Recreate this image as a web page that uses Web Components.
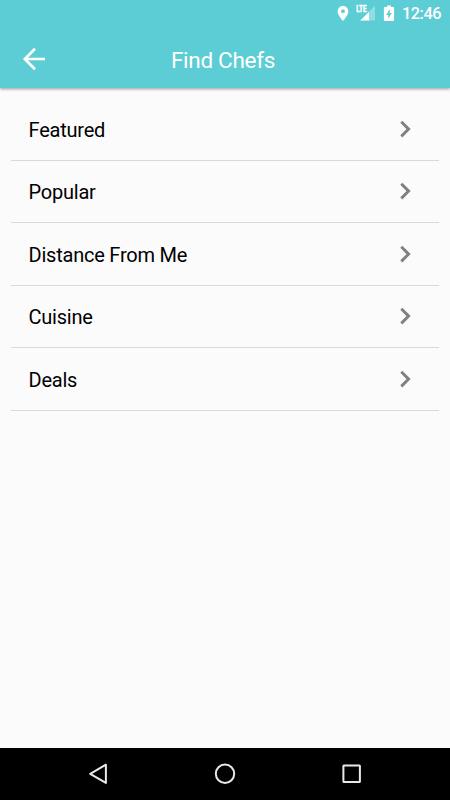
<!DOCTYPE html>
<html lang="en">
<head>
<meta charset="utf-8">
<title>Find Chefs</title>
<style>
html, body { margin: 0; height: 100%; background: #fbfbfb; overflow: hidden; }
</style>
</head>
<body>
<chef-screen></chef-screen>
<script>
class ShadowElement extends HTMLElement {
  constructor() {
    super();
    this.attachShadow({ mode: 'open' }).innerHTML = this.constructor.markup;
  }
}

class StatusBar extends ShadowElement {
  static markup = `
    <style>
      :host { display: flex; justify-content: flex-end; box-sizing: border-box; height: 30px; padding-right: 9px; color: #fff; }
      svg { display: block; flex: none; }
      .time { width: 39px; font-size: 16.3px; font-weight: 500; line-height: 28px; white-space: nowrap; letter-spacing: -.45px; }
    </style>
    <svg width="66" height="30" viewBox="336 0 66 30" fill="#fff">
      <path fill-rule="evenodd" d="M343 5.8a5.4 5.4 0 0 0-5.4 5.4c0 4 5.4 9.7 5.4 9.7s5.4-5.7 5.4-9.7A5.4 5.4 0 0 0 343 5.8zm0 3.5a1.9 1.9 0 1 1 0 3.8 1.9 1.9 0 0 1 0-3.8z"/>
      <path d="M375 5.6V20.6H360L367 13.6V12.8h.8z" opacity=".33"/>
      <path d="M369 12V20.6H360.3z"/>
      <text x="356.2" y="12.3" font-size="9" font-weight="700" stroke="#fff" stroke-width=".5" textLength="10.3" lengthAdjust="spacingAndGlyphs">LTE</text>
      <path fill-rule="evenodd" d="M387.1 5.4h3.8v1.5h2.2q1 0 1 1v12.2q0 1-1 1h-8.2q-1 0-1-1V7.9q0-1 1-1h2.2zM389.8 9.1l-3.6 5.8h2.1v4l3.5-5.8h-2z"/>
    </svg>
    <span class="time">12:46</span>`;
}

class NavHeader extends ShadowElement {
  static markup = `
    <style>
      :host { display: grid; grid-template-columns: 58px 1fr 62px; height: 57.5px; align-items: center; color: #fff; }
      svg { display: block; margin-left: 22px; }
      .title { text-align: center; font-size: 22.5px; line-height: 28px; padding-top: 2.5px; white-space: nowrap; letter-spacing: -.3px; }
    </style>
    <svg width="24" height="24" viewBox="22 47 24 24" fill="none" stroke="#fff" stroke-width="2.7">
      <path d="M45 59H25M35 48.8 24.8 59 35 69.2"/>
    </svg>
    <span class="title"><slot></slot></span>`;
}

class ListRow extends ShadowElement {
  static markup = `
    <style>
      :host { display: flex; align-items: center; justify-content: space-between; box-sizing: border-box; height: 62.5px; padding: 1px 27px 0 17.5px; border-bottom: 1.25px solid #d9d9d9; color: #000; font-size: 20px; line-height: 24px; letter-spacing: -.22px; }
      span { padding-top: 1px; }
      svg { display: block; margin-bottom: 1px; }
    </style>
    <span><slot></slot></span>
    <svg width="14" height="20" viewBox="399 119 14 20" fill="none" stroke="#808080" stroke-width="2.9">
      <path d="M402.3 121.8 409.6 129.1 402.3 136.4"/>
    </svg>`;
}

class SystemNav extends ShadowElement {
  static markup = `
    <style>
      :host { display: block; height: 52.5px; background: #000; }
      svg { display: block; }
    </style>
    <svg width="450" height="52" viewBox="0 748 450 52" fill="none" stroke="#e9e9e9" stroke-width="2" stroke-linejoin="round">
      <path d="M90.2 773.8 105.9 764.7V782.9z"/>
      <circle cx="225" cy="773.8" r="9.2"/>
      <rect x="343.4" y="765.6" width="16.5" height="16.5" rx=".5"/>
    </svg>`;
}

class ChefScreen extends ShadowElement {
  static markup = `
    <style>
      :host { display: flex; flex-direction: column; width: 450px; height: 800px; background: #fbfbfb; font-family: Roboto, "Liberation Sans", sans-serif; }
      header { flex: none; position: relative; background: #5ccdd5; box-shadow: 0 1px 3px rgba(0,0,0,.4); }
      main { flex: 1; padding: 10.5px 11px 0; }
      system-nav { flex: none; }
    </style>
    <header><status-bar></status-bar><nav-header>Find Chefs</nav-header></header>
    <main>
      <list-row>Featured</list-row>
      <list-row>Popular</list-row>
      <list-row>Distance From Me</list-row>
      <list-row>Cuisine</list-row>
      <list-row>Deals</list-row>
    </main>
    <system-nav></system-nav>`;
}

customElements.define('status-bar', StatusBar);
customElements.define('nav-header', NavHeader);
customElements.define('list-row', ListRow);
customElements.define('system-nav', SystemNav);
customElements.define('chef-screen', ChefScreen);
</script>
</body>
</html>
